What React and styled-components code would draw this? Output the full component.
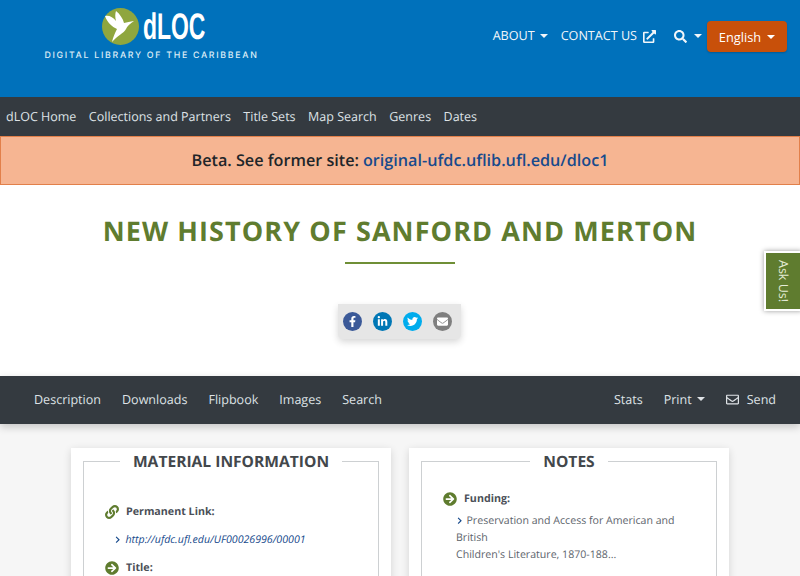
import styled, { createGlobalStyle } from 'styled-components';
import { FaArrowCircleRight, FaChevronRight, FaExternalLinkAlt, FaFacebookF, FaLink, FaLinkedinIn, FaRegEnvelope, FaSearch, FaTwitter, FaEnvelope } from 'react-icons/fa';

const Global = createGlobalStyle`
  html, body { margin: 0; padding: 0; height: 576px; overflow: hidden; background: #fff; }
  body { font-family: 'Open Sans', sans-serif; font-size: 12.5px; color: #495057; text-rendering: geometricPrecision; }
  * { box-sizing: border-box; }
`;

const Page = styled.div`
  width: 800px;
  height: 576px;
  overflow: hidden;
  position: relative;
`;

const Header = styled.header`
  height: 97px;
  background: #0071bb;
  display: flex;
  justify-content: space-between;
  padding: 8px 13px 0 45px;
`;

const Logo = styled.div`
  width: 213px;
  display: flex;
  flex-direction: column;
  align-items: center;
`;

const LogoTop = styled.div`
  display: flex;
  align-items: center;
  gap: 4px;
  height: 37px;
  margin-left: 4px;
`;

const LogoName = styled.span`
  font-family: 'Liberation Sans', sans-serif;
  font-weight: 700;
  font-size: 37px;
  line-height: 37px;
  color: #fff;
  width: 62px;
  display: block;
  transform: scaleX(.62);
  transform-origin: left center;
  white-space: nowrap;
`;

const LogoTagline = styled.div`
  font-family: 'Inter', sans-serif;
  font-size: 8.8px;
  font-weight: 500;
  letter-spacing: 1.7px;
  color: #dcecf6;
  margin-top: 5px;
  white-space: nowrap;
`;

const TopNav = styled.nav`
  display: flex;
  align-items: flex-start;
  padding-top: 13px;
`;

const TopLink = styled.a`
  color: #f1f6fa;
  font-size: 12.6px;
  height: 30px;
  line-height: 30px;
  display: flex;
  align-items: center;
  margin-right: ${p => p.$gap}px;
  white-space: nowrap;
  svg { margin-left: 6px; }
`;

const Caret = styled.span`
  display: inline-block;
  margin-left: ${p => p.$left ?? 5}px;
  border-top: 4.5px solid currentColor;
  border-left: 4.5px solid transparent;
  border-right: 4.5px solid transparent;
`;

const LangButton = styled.button`
  width: 80px;
  height: 31px;
  background: #c8500a;
  border: 0;
  border-radius: 4px;
  color: #fff;
  font: 12.8px 'Open Sans', sans-serif;
  display: flex;
  align-items: center;
  justify-content: center;
  box-shadow: 0 1px 2px rgba(0,0,0,.2);
`;

const SubNav = styled.nav`
  height: 39px;
  background: #343a40;
  display: flex;
  align-items: center;
  gap: 12.5px;
  padding-left: 6px;
  color: #dee2e6;
  font-size: 12.5px;
`;

const Banner = styled.div`
  height: 49px;
  background: #f6b592;
  border: 1px solid #e2804a;
  display: flex;
  align-items: center;
  justify-content: center;
  gap: 4px;
  padding-bottom: 2px;
  font-size: 16.2px;
  font-weight: 600;
  color: #212529;
`;

const BannerLink = styled.a`
  color: #174a8c;
`;

const TitleBlock = styled.section`
  height: 191px;
  display: flex;
  flex-direction: column;
  align-items: center;
  padding-top: 26px;
`;

const Title = styled.h1`
  margin: 0;
  color: #5f7c2f;
  font-size: 27px;
  line-height: 40px;
  font-weight: 700;
  letter-spacing: 1.1px;
  white-space: nowrap;
`;

const Rule = styled.div`
  width: 110px;
  height: 2px;
  background: #6f8f36;
  margin-top: 11px;
`;

const ShareBar = styled.div`
  width: 123px;
  height: 35px;
  margin-top: 40px;
  margin-right: 1px;
  background: #e6e6e6;
  border-radius: 0 0 5px 5px;
  box-shadow: 0 3px 7px rgba(0,0,0,.16);
  display: flex;
  align-items: center;
  gap: 11px;
  padding-left: 5px;
`;

const ShareIcon = styled.span`
  width: 19px;
  height: 19px;
  border-radius: 50%;
  background: ${p => p.$bg};
  color: #fff;
  font-size: 11px;
  display: flex;
  align-items: center;
  justify-content: center;
`;

const ToolBar = styled.nav`
  height: 48px;
  background: #343a40;
  display: flex;
  align-items: center;
  justify-content: space-between;
  padding: 0 24px 2px 34px;
  color: #dee2e6;
  font-size: 12.55px;
  box-shadow: 0 3px 8px rgba(0,0,0,.2);
  position: relative;
`;

const ToolGroup = styled.div`
  display: flex;
  align-items: center;
  gap: ${p => p.$gap}px;
`;

const ToolItem = styled.span`
  display: flex;
  align-items: center;
  svg { margin-right: 8px; }
`;

const Content = styled.main`
  height: 152px;
  background: #f6f6f6;
  display: grid;
  grid-template-columns: 320px 320px;
  gap: 18px;
  padding: 24px 0 0 71px;
`;

const Card = styled.section`
  background: #fff;
  box-shadow: 0 2px 8px rgba(0,0,0,.14);
  padding: 2px 12px 0;
  height: 200px;
`;

const Fieldset = styled.fieldset`
  margin: 0;
  border: 1px solid #cdd0d2;
  border-bottom: 0;
  padding: 0 21px;
  height: 200px;
  min-width: 0;
`;

const Legend = styled.legend`
  margin: 0 auto;
  padding: 0 13px;
  font-size: 15.6px;
  font-weight: 700;
  color: #43474b;
  line-height: 22px;
  white-space: nowrap;
`;

const FieldLabel = styled.div`
  display: flex;
  align-items: center;
  gap: 7px;
  font-size: 10.7px;
  font-weight: 700;
  color: #4a4f57;
  height: 20px;
  margin-top: ${p => p.$top}px;
  svg { color: #5f7c2f; font-size: 14px; flex: none; }
`;

const Value = styled.div`
  margin-top: ${p => p.$top}px;
  padding-left: ${p => p.$indent}px;
  font-size: 10.6px;
  line-height: 17px;
  color: #5d646c;
`;

const Bullet = styled(FaChevronRight)`
  color: #174a8c;
  font-size: 7.5px;
  margin-right: ${p => p.$gap}px;
`;

const UrlLink = styled.a`
  color: #174a8c;
  font-style: italic;
`;

const AskUs = styled.aside`
  position: absolute;
  top: 251px;
  right: -2px;
  width: 38px;
  height: 60px;
  background: #5f7c2f;
  border: 2px solid #fff;
  box-shadow: 0 0 5px rgba(0,0,0,.4);
  color: #e5ecd8;
  font-size: 12.5px;
  writing-mode: vertical-rl;
  display: flex;
  align-items: center;
  justify-content: center;
`;

function Bird() {
  return (
    <svg width="37" height="37" viewBox="0 0 37 37">
      <circle cx="18.5" cy="18.5" r="18.5" fill="#8fa63e" />
      <path d="M3 8 C7 7 11 9 14 13 C13 9 13 6 14 3 C18 6 21 11 22 15 C25 14 28 14 32 13 C28 16 25 18 24 21 C22 25 15 28 10 34 C11 29 13 25 15 21 C10 19 5 14 3 8 Z" fill="#fff" />
    </svg>
  );
}

export default function App() {
  return (
    <Page>
      <Global />
      <Header>
        <Logo>
          <LogoTop>
            <Bird />
            <LogoName>dLOC</LogoName>
          </LogoTop>
          <LogoTagline>DIGITAL LIBRARY OF THE CARIBBEAN</LogoTagline>
        </Logo>
        <TopNav>
          <TopLink $gap={13}>ABOUT<Caret /></TopLink>
          <TopLink $gap={12}>CONTACT US<FaExternalLinkAlt size={13} /></TopLink>
          <TopLink $gap={5}><FaSearch size={13} /><Caret $left={7} /></TopLink>
          <LangButton>English<Caret $left={6} /></LangButton>
        </TopNav>
      </Header>

      <SubNav>
        <span>dLOC Home</span>
        <span>Collections and Partners</span>
        <span>Title Sets</span>
        <span>Map Search</span>
        <span>Genres</span>
        <span>Dates</span>
      </SubNav>

      <Banner>
        Beta. See former site: <BannerLink>original-ufdc.uflib.ufl.edu/dloc1</BannerLink>
      </Banner>

      <TitleBlock>
        <Title>NEW HISTORY OF SANFORD AND MERTON</Title>
        <Rule />
        <ShareBar>
          <ShareIcon $bg="#3b5998"><FaFacebookF /></ShareIcon>
          <ShareIcon $bg="#0077b5"><FaLinkedinIn /></ShareIcon>
          <ShareIcon $bg="#00aced"><FaTwitter /></ShareIcon>
          <ShareIcon $bg="#7f7f7f"><FaEnvelope /></ShareIcon>
        </ShareBar>
      </TitleBlock>

      <ToolBar>
        <ToolGroup $gap={21}>
          <span>Description</span>
          <span>Downloads</span>
          <span>Flipbook</span>
          <span>Images</span>
          <span>Search</span>
        </ToolGroup>
        <ToolGroup $gap={21}>
          <span>Stats</span>
          <ToolItem>Print<Caret /></ToolItem>
          <ToolItem><FaRegEnvelope size={13} />Send</ToolItem>
        </ToolGroup>
      </ToolBar>

      <Content>
        <Card>
          <Fieldset>
            <Legend>MATERIAL INFORMATION</Legend>
            <FieldLabel $top={30}><FaLink />Permanent Link:</FieldLabel>
            <Value $top={10} $indent={9}>
              <Bullet $gap={4} /><UrlLink>http://ufdc.ufl.edu/UF00026996/00001</UrlLink>
            </Value>
            <FieldLabel $top={9}><FaArrowCircleRight />Title:</FieldLabel>
          </Fieldset>
        </Card>
        <Card>
          <Fieldset>
            <Legend>NOTES</Legend>
            <FieldLabel $top={17}><FaArrowCircleRight />Funding:</FieldLabel>
            <Value $top={4} $indent={13}>
              <Bullet $gap={3} />Preservation and Access for American and British<br />
              Children's Literature, 1870-188...
            </Value>
          </Fieldset>
        </Card>
      </Content>

      <AskUs>Ask Us!</AskUs>
    </Page>
  );
}
